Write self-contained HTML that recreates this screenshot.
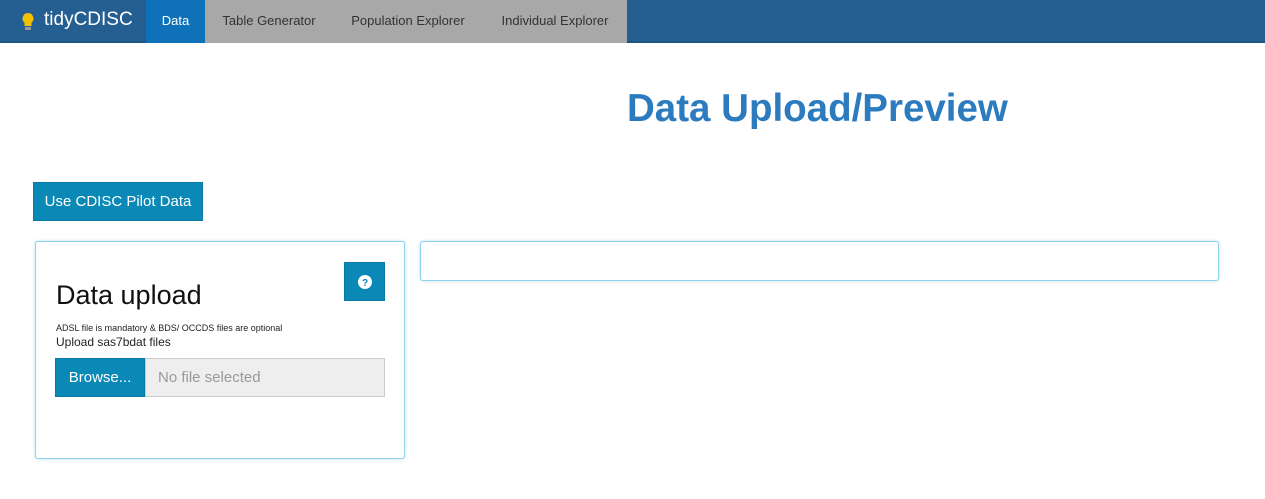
<!DOCTYPE html>
<html><head><meta charset="utf-8"><style>
*{box-sizing:border-box;margin:0;padding:0}
body{width:1265px;height:499px;background:#fff;font-family:"Liberation Sans",sans-serif;position:relative;overflow:hidden}
.nav{position:absolute;left:0;top:0;width:1265px;height:43px;background:#255f91;border-bottom:2px solid #1f5585}
.brand{position:absolute;left:20px;top:9px;color:#fff;font-size:19px}
.tab{position:absolute;top:0;height:43px;line-height:41px;font-size:13px;color:#333;text-align:center}
.t1{left:146px;width:59px;background:#0f72b8;color:#fff}
.gray{left:205px;width:422px;background:#a8a8a8}
h1{position:absolute;left:627px;top:87px;font-size:38.5px;color:#2c7bbf;font-weight:bold}
.btn{position:absolute;background:#0a88b6;color:#fff;border:1px solid #087aa3}
.b1{left:33px;top:182px;width:170px;height:39px;line-height:37px;font-size:15px;text-align:center}
.panel{position:absolute;border:1px solid #8ed3ec;border-radius:3px;box-shadow:0 0 3px rgba(0,130,190,.25);background:#fff}
</style></head><body>
<div class="nav">
<svg style="position:absolute;left:21px;top:12px" width="14" height="20" viewBox="0 0 14 20"><path d="M7 1a5.5 5.5 0 0 0-3.5 9.7V14h7v-3.3A5.5 5.5 0 0 0 7 1z" fill="#f2c200"/><rect x="4" y="15" width="6" height="3" fill="#999"/></svg>
<div class="brand" style="left:44px">tidyCDISC</div>
<div class="tab t1">Data</div>
<div class="tab gray"></div>
<div class="tab" style="left:205px;width:128px">Table Generator</div>
<div class="tab" style="left:333px;width:150px">Population Explorer</div>
<div class="tab" style="left:483px;width:144px">Individual Explorer</div>
</div>
<h1>Data Upload/Preview</h1>
<div class="btn b1">Use CDISC Pilot Data</div>
<div class="panel" style="left:35px;top:241px;width:370px;height:218px">
<div class="btn" style="left:308px;top:20px;width:41px;height:39px"><svg style="position:absolute;left:13px;top:12px" width="14" height="14" viewBox="0 0 14 14"><circle cx="7" cy="7" r="7" fill="#fff"/><text x="7" y="11" font-size="10" font-weight="bold" fill="#0a88b6" text-anchor="middle" font-family="Liberation Sans">?</text></svg></div>
<div style="position:absolute;left:20px;top:38px;font-size:27px;color:#111">Data upload</div>
<div style="position:absolute;left:20px;top:81px;font-size:9px;color:#222">ADSL file is mandatory &amp; BDS/ OCCDS files are optional</div>
<div style="position:absolute;left:20px;top:93px;font-size:12px;color:#222">Upload sas7bdat files</div>
<div class="btn" style="left:19px;top:116px;width:90px;height:39px;line-height:37px;font-size:15px;text-align:center">Browse...</div>
<div style="position:absolute;left:109px;top:116px;width:240px;height:39px;background:#eee;border:1px solid #ccc;line-height:37px;padding-left:12px;font-size:15px;color:#999">No file selected</div>
</div>
<div class="panel" style="left:420px;top:241px;width:799px;height:40px"></div>
</body></html>
